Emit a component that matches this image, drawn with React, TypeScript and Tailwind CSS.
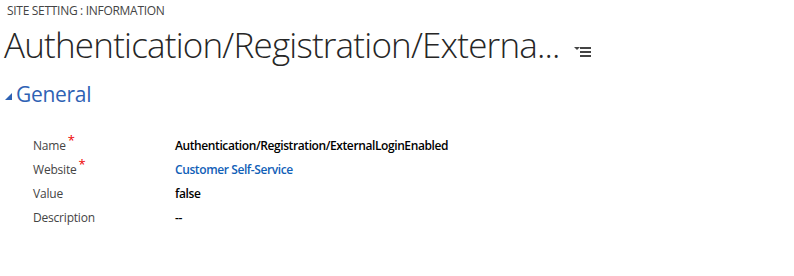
import { ReactNode } from "react"

const font = { fontFamily: '"Segoe UI", "Open Sans", "Noto Sans", sans-serif' }

type Row = {
    label: string
    required?: boolean
    value: ReactNode
}

const rows: Row[] = [
    { label: "Name", required: true, value: <span className="font-semibold text-black">Authentication/Registration/ExternalLoginEnabled</span> },
    { label: "Website", required: true, value: <span className="font-semibold text-[#1160b7]">Customer Self-Service</span> },
    { label: "Value", value: <span className="font-semibold text-black">false</span> },
    { label: "Description", value: <span className="font-semibold text-black">--</span> },
]

const App = () => {
    return (
        <div className="w-[794px] h-[276px] bg-white overflow-hidden" style={font}>

            {/* header */}
            <div className="pl-[7px] pt-[3px] text-[12px] leading-[16px] text-[#444] tracking-[-0.3px]">
                SITE SETTING : INFORMATION
            </div>

            <div className="flex items-end pl-[4px] mt-[2px]">
                <h1 className="text-[35px] leading-[48px] font-light text-[#262626] tracking-[-0.8px]">
                    Authentication/Registration/Externa...
                </h1>
                <svg width="18" height="12" viewBox="0 0 18 12" className="ml-[14px] mb-[11px]">
                    <polygon points="0,1 6,1 3,4" fill="#444" />
                    <rect x="6" y="1" width="11" height="2" fill="#444" />
                    <rect x="6" y="5" width="11" height="2" fill="#444" />
                    <rect x="6" y="9" width="11" height="2" fill="#444" />
                </svg>
            </div>

            {/* section */}
            <div className="flex items-center pl-[5px] mt-[11px]">
                <svg width="7" height="7" viewBox="0 0 7 7" className="mt-[4px]">
                    <polygon points="7,0 7,7 0,7" fill="#2e62b4" />
                </svg>
                <span className="ml-[4px] text-[21px] leading-[28px] text-[#2e62b4] tracking-[-0.3px]">General</span>
            </div>

            <div className="mt-[26px] pl-[33px] flex flex-col">
                {rows.map((r, i) => (
                    <div key={i} className="flex h-[24px] items-center text-[12px]">
                        <div className="w-[142px] text-[#444] tracking-[-0.2px]">
                            {r.label}
                            {r.required && <span className="text-[#e00] relative -top-[5px] ml-[2px] text-[13px]">*</span>}
                        </div>
                        <div className="tracking-[-0.4px]">{r.value}</div>
                    </div>
                ))}
            </div>

        </div>
    )
}

export default App
